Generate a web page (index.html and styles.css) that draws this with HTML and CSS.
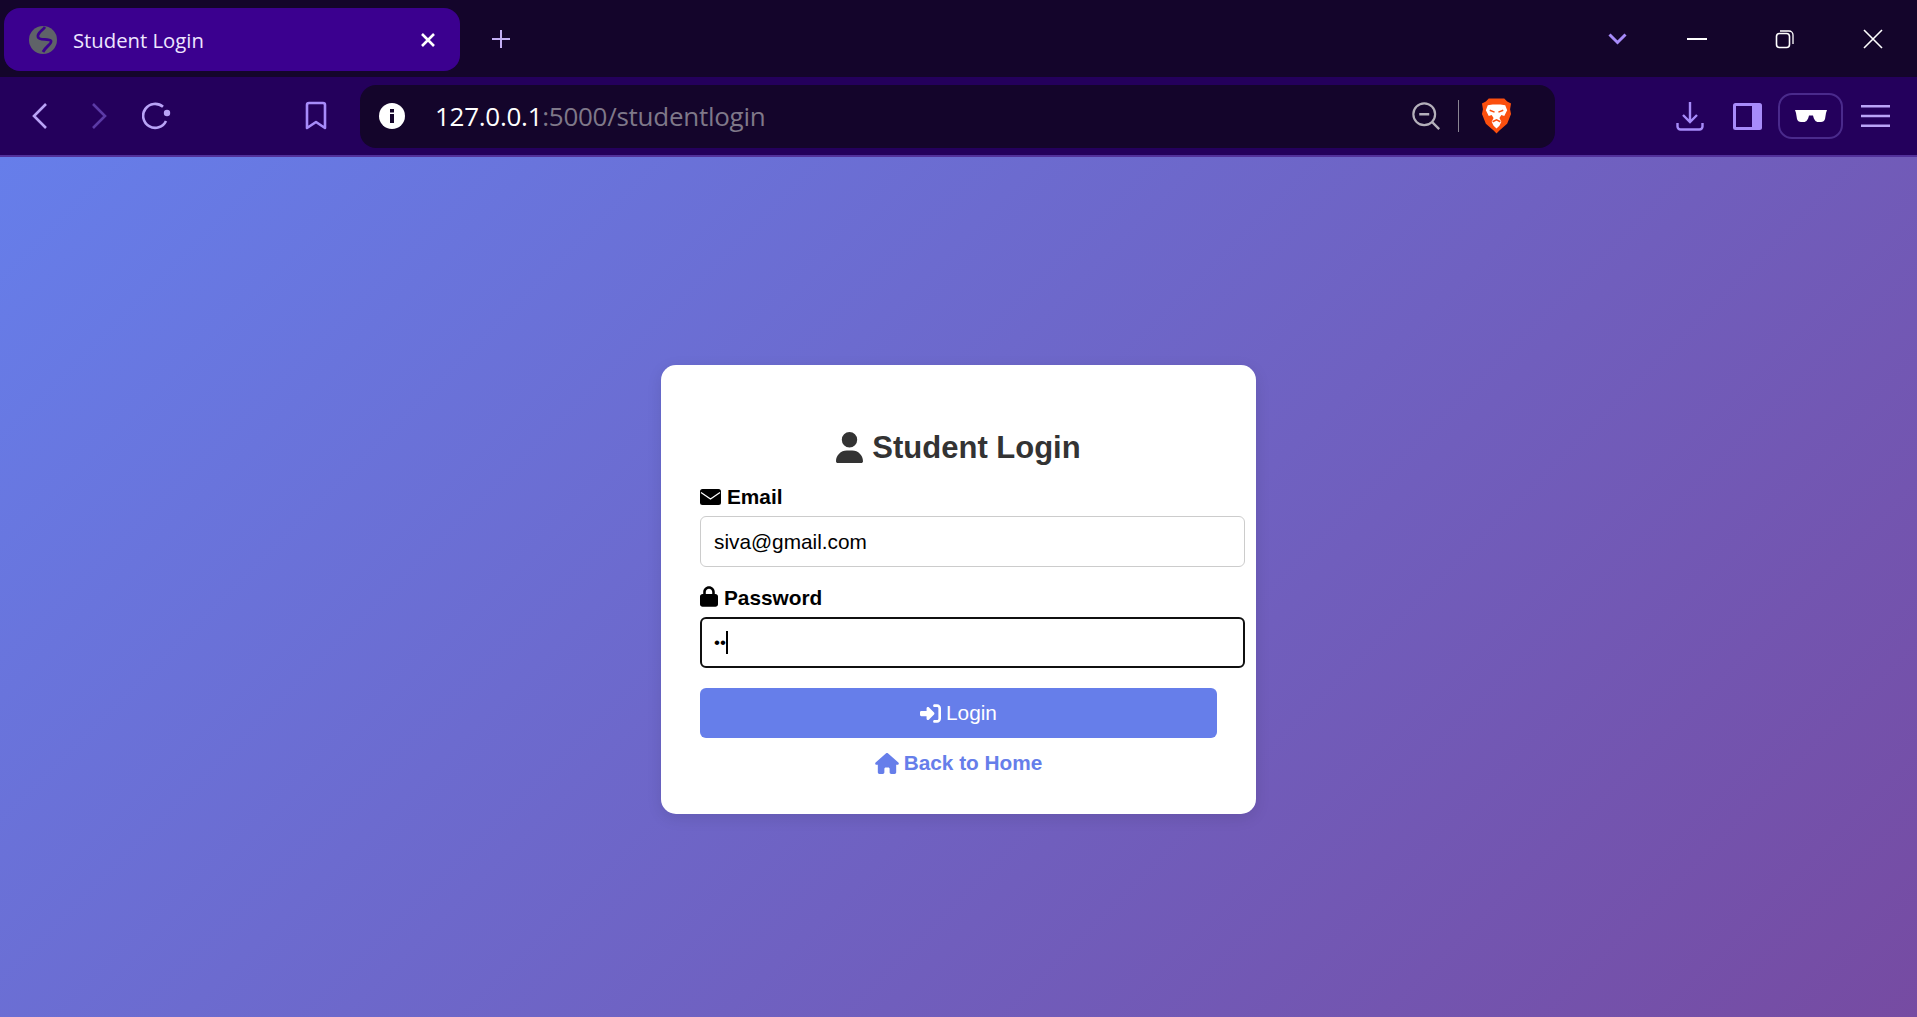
FILE: index.html
```html
<!DOCTYPE html>
<html lang="en">
<head>
  <meta charset="UTF-8" />
  <title>Student Login</title>
  <link rel="stylesheet" href="styles.css">
</head>
<body>
  <header class="browser">
    <div class="tabstrip">
      <div class="tab">
        <svg class="favicon" viewBox="0 0 28 28"><circle cx="14" cy="14" r="14" fill="#5f6368"/><path d="M16 1C13 5 8 7 9 11c1 4 11 1 13 4 1 3-5 5-8 11" fill="none" stroke="#3b008f" stroke-width="2.800"/></svg>
        <span class="tab-title">Student Login</span>
        <svg class="tab-close" viewBox="0 0 16 16"><path d="M2 2l12 12M14 2L2 14" stroke="#fff" stroke-width="2.600"/></svg>
      </div>
      <svg class="newtab" viewBox="0 0 20 20"><path d="M10 1v18M1 10h18" stroke="#c4b0f5" stroke-width="2"/></svg>
      <div class="strip-space"></div>
      <svg class="tabsearch" viewBox="0 0 19 12"><path d="M1.500 1.500l8 8 8-8" fill="none" stroke="#a78bfa" stroke-width="3"/></svg>
      <div class="winbtn"><svg width="20" height="20" viewBox="0 0 20 20"><path d="M0 10h20" stroke="#fff" stroke-width="2"/></svg></div>
      <div class="winbtn"><svg width="20" height="20" viewBox="0 0 20 20"><rect x="1.500" y="4.500" width="13" height="14" rx="3" fill="none" stroke="#fff" stroke-width="1.600"/><path d="M5 2h9a4 4 0 0 1 4 4v9" fill="none" stroke="#fff" stroke-width="1.300"/></svg></div>
      <div class="winbtn"><svg width="20" height="20" viewBox="0 0 20 20"><path d="M1 1l18 18M19 1L1 19" stroke="#fff" stroke-width="1.600"/></svg></div>
    </div>
    <div class="toolbar">
      <svg class="tool back" viewBox="0 0 16 28"><path d="M14 2L2 14l12 12" fill="none" stroke="#b9a3f7" stroke-width="2.600"/></svg>
      <svg class="tool forward" viewBox="0 0 16 28"><path d="M2 2l12 12L2 26" fill="none" stroke="#5b3aa6" stroke-width="2.600"/></svg>
      <svg class="tool reload" viewBox="0 0 30 28"><path d="M21 4.800A12 12 0 1 0 24 19" fill="none" stroke="#b9a3f7" stroke-width="2.600"/><circle cx="25" cy="11" r="3.200" fill="#b9a3f7"/></svg>
      <svg class="tool bookmark" viewBox="0 0 22 30"><path d="M2 4a2 2 0 0 1 2-2h14a2 2 0 0 1 2 2v23l-9-6-9 6z" fill="none" stroke="#a78bfa" stroke-width="2.600" stroke-linejoin="round"/></svg>
      <div class="omnibox">
        <svg class="info" viewBox="0 0 26 26"><circle cx="13" cy="13" r="13" fill="#fff"/><path d="M11 11h4v9h-4zM11 6h4v3.400h-4z" fill="#14052b"/></svg>
        <span class="url"><span class="url-host">127.0.0.1</span>:5000/studentlogin</span>
        <svg class="zoomout" viewBox="0 0 32 32"><circle cx="13.500" cy="13.500" r="12" fill="none" stroke="#b4b0ba" stroke-width="2.400"/><path d="M8 13.500h11M22 22l8 8" stroke="#b4b0ba" stroke-width="2.600"/></svg>
        <span class="omni-sep"></span>
        <svg class="lion" viewBox="0 0 32 36"><path d="M8 0h16l3 3 4 2-1 6 1 5-4 10-8 7-3 3-3-3-8-7L1 16l1-5-1-6 4-2z" fill="#fb4f0e"/><path d="M7 7l5-1h8l5 1 2 5-3 6-3-1-2 3 2 4-2 4-3 3-3-3-2-4 2-4-2-3-3 1-3-6z" fill="#fff"/><path d="M9 12l5 2M23 12l-5 2M12 24l4-2 4 2" fill="none" stroke="#fb4f0e" stroke-width="1.600"/></svg>
      </div>
      <svg class="tool download" viewBox="0 0 28 30"><path d="M14 1v20M7 14l7 7 7-7M1.500 22v3.500a3 3 0 0 0 3 3h19a3 3 0 0 0 3-3V22" fill="none" stroke="#a78bfa" stroke-width="2.400"/></svg>
      <svg class="tool sidebar" viewBox="0 0 29 27"><rect x="0" y="0" width="29" height="27" rx="2.500" fill="#a78bfa"/><rect x="3" y="3" width="16" height="21" fill="#24005c"/></svg>
      <div class="shields"><svg class="glasses" viewBox="0 0 32 12"><path d="M0 0h32l-1 3-1 6c-.5 2-2 3-4 3h-3c-2 0-4-2-5-6.500h-4C13 10 11 12 9 12H6c-2 0-3.500-1-4-3L1 3z" fill="#fff"/></svg></div>
      <svg class="tool menu" viewBox="0 0 29 22"><path d="M0 1.200h29M0 11h29M0 20.800h29" stroke="#b9a3f7" stroke-width="2.400"/></svg>
    </div>
  </header>

  <main class="page">
    <form class="login-card">
      <h2 class="card-title">
        <svg class="ico-user" viewBox="0 0 448 512"><path d="M224 256a128 128 0 1 0 0-256 128 128 0 1 0 0 256zm-45.700 48C79.800 304 0 383.800 0 482.300 0 498.700 13.300 512 29.700 512h388.600c16.400 0 29.700-13.300 29.700-29.700C448 383.800 368.200 304 269.700 304h-91.400z"/></svg>
        Student Login
      </h2>
      <label class="field-label">
        <svg class="ico-mail" viewBox="0 0 21 16"><rect width="21" height="16" rx="2.500"/><path d="M1 3.500l9.500 6.500L20 3.500" fill="none" stroke="#fff" stroke-width="1.300"/></svg>
        Email
      </label>
      <input class="field" type="text" value="siva@gmail.com" />
      <label class="field-label">
        <svg class="ico-lock" viewBox="0 0 448 512"><path d="M144 144v48H304V144c0-44.200-35.800-80-80-80s-80 35.800-80 80zM80 192V144C80 64.500 144.500 0 224 0s144 64.500 144 144v48h16c35.300 0 64 28.700 64 64V448c0 35.300-28.700 64-64 64H64c-35.300 0-64-28.700-64-64V256c0-35.300 28.700-64 64-64H80z"/></svg>
        Password
      </label>
      <div class="field field-focus"><span class="dots">••</span><span class="caret"></span></div>
      <button class="login-btn" type="button">
        <svg class="ico-login" viewBox="0 0 512 512"><path d="M352 96h64c17.700 0 32 14.300 32 32V384c0 17.700-14.300 32-32 32H352c-17.700 0-32 14.300-32 32s14.300 32 32 32h64c53 0 96-43 96-96V128c0-53-43-96-96-96H352c-17.700 0-32 14.300-32 32s14.300 32 32 32zM342.600 278.600c12.500-12.500 12.500-32.800 0-45.300l-128-128c-9.200-9.200-22.900-11.900-34.900-6.900S160 115.100 160 128v64H32c-17.700 0-32 14.300-32 32v64c0 17.700 14.300 32 32 32H160v64c0 12.900 7.800 24.600 19.800 29.600s25.700 2.200 34.900-6.900l128-128z"/></svg>
        Login
      </button>
      <a class="home-link" href="#">
        <svg class="ico-home" viewBox="0 0 576 512"><path d="M575.800 255.500c0 18-15 32.100-32 32.100h-32l.7 160.200c0 2.700-.2 5.400-.5 8.100V472c0 22.100-17.900 40-40 40H456c-1.100 0-2.200 0-3.300-.1-1.400.1-2.800.1-4.200.1H416 392c-22.100 0-40-17.900-40-40V448 384c0-17.700-14.300-32-32-32H256c-17.700 0-32 14.300-32 32v64 24c0 22.100-17.900 40-40 40H160 128.100c-1.500 0-3-.1-4.500-.2-1.200.1-2.400.2-3.600.2H104c-22.100 0-40-17.900-40-40V360c0-.9 0-1.900.1-2.800V287.600H32c-18 0-32-14-32-32.100 0-9 3-17 10-24L266.400 8c7-7 15-8 22-8s15 2 21 7L564.800 231.500c8 7 12 15 11 24z"/></svg>
        Back to Home
      </a>
    </form>
  </main>
</body>
</html>
```

FILE: styles.css
```css
* {
  box-sizing: border-box;
}

html, body {
  margin: 0;
  height: 100%;
}

body {
  display: flex;
  flex-direction: column;
  overflow: hidden;
  font-family: "Liberation Sans", Arial, sans-serif;
}

/* browser chrome */
.browser {
  flex: none;
  font-family: "Open Sans", "Noto Sans", sans-serif;
}

.tabstrip {
  display: flex;
  align-items: center;
  height: 77px;
  padding-left: 4px;
  background-color: #14052b;
}

.tab {
  display: flex;
  align-items: center;
  width: 456px;
  height: 63px;
  margin-top: 2px;
  padding: 0 24px 0 25px;
  background-color: #3b008f;
  border-radius: 16px;
  color: #fff;
}

.favicon {
  width: 28px;
  height: 28px;
  flex: none;
}

.tab-title {
  flex: 1;
  margin-left: 16px;
  font-size: 20.3px;
  color: #eee6ff;
}

.tab-close {
  width: 16px;
  height: 16px;
}

.newtab {
  width: 20px;
  height: 20px;
  margin-left: 31px;
}

.strip-space {
  flex: 1;
}

.tabsearch {
  width: 19px;
  height: 12px;
  margin-right: 26px;
}

.winbtn {
  display: flex;
  align-items: center;
  justify-content: center;
  width: 88px;
  height: 40px;
}

.toolbar {
  display: flex;
  align-items: center;
  height: 80px;
  padding-left: 32px;
  background-color: #24005c;
  border-bottom: 2px solid #52309a;
}

.tool {
  flex: none;
}

.back {
  width: 16px;
  height: 28px;
}

.forward {
  width: 16px;
  height: 28px;
  margin-left: 43px;
}

.reload {
  width: 30px;
  height: 28px;
  margin-left: 35px;
}

.bookmark {
  width: 22px;
  height: 30px;
  margin-left: 133px;
}

.omnibox {
  display: flex;
  align-items: center;
  width: 1195px;
  height: 63px;
  margin-left: 33px;
  padding: 0 43px 0 19px;
  background-color: #14052b;
  border-radius: 16px;
}

.info {
  width: 26px;
  height: 26px;
}

.url {
  flex: 1;
  margin-left: 30px;
  font-size: 26px;
  letter-spacing: -0.27px;
  color: #7f7889;
}

.url-host {
  color: #fff;
}

.zoomout {
  width: 29px;
  height: 29px;
}

.omni-sep {
  width: 1px;
  height: 32px;
  margin: 0 22px 0 17px;
  background-color: #8a8593;
}

.lion {
  width: 31px;
  height: 36px;
}

.download {
  width: 28px;
  height: 30px;
  margin-left: 121px;
}

.sidebar {
  width: 29px;
  height: 27px;
  margin-left: 29px;
}

.shields {
  display: flex;
  align-items: center;
  justify-content: center;
  width: 65px;
  height: 46px;
  margin-left: 16px;
  border: 2px solid #4a2a8c;
  border-radius: 14px;
}

.glasses {
  width: 32px;
  height: 12px;
}

.menu {
  width: 29px;
  height: 22px;
  margin-left: 18px;
}

/* login page */
.page {
  flex: 1;
  display: flex;
  align-items: center;
  justify-content: center;
  padding-top: 5px;
  background: linear-gradient(135deg, #667eea 0%, #764ba2 100%);
}

.login-card {
  width: 595px;
  height: 449px;
  padding: 64px 39px 0;
  background-color: #fff;
  border-radius: 15px;
  box-shadow: 0 4px 15px rgba(0, 0, 0, 0.1);
}

.card-title {
  display: flex;
  align-items: center;
  justify-content: center;
  gap: 9px;
  margin: 0 0 19px;
  font-size: 31px;
  line-height: 37px;
  color: #333;
}

.ico-user {
  width: 27px;
  height: 31px;
  fill: #333;
}

.field-label {
  display: flex;
  align-items: center;
  gap: 6px;
  height: 24px;
  margin-bottom: 7px;
  font-size: 20.8px;
  font-weight: bold;
  color: #000;
}

.ico-mail {
  width: 21px;
  height: 16px;
}

.ico-lock {
  width: 18px;
  height: 21px;
  margin-top: -3px;
}

.field {
  display: flex;
  align-items: center;
  width: 545px;
  height: 51px;
  margin-bottom: 19px;
  padding: 0 13px;
  border: 1px solid #ccc;
  border-radius: 6px;
  background-color: #fff;
  font-family: "Liberation Sans", Arial, sans-serif;
  font-size: 20.8px;
  color: #000;
  outline: none;
}

.field-focus {
  margin-bottom: 20px;
  border: 2px solid #101010;
  padding: 0 12px;
}

.dots {
  font-size: 17px;
}

.caret {
  width: 2px;
  height: 23px;
  background-color: #000;
}

.login-btn {
  display: flex;
  align-items: center;
  justify-content: center;
  gap: 5px;
  width: 100%;
  height: 50px;
  padding: 0;
  border: none;
  border-radius: 6px;
  background-color: #667eea;
  color: #fff;
  font-family: "Liberation Sans", Arial, sans-serif;
  font-size: 20.8px;
}

.ico-login {
  width: 21px;
  height: 21px;
  fill: #fff;
}

.home-link {
  display: flex;
  align-items: center;
  justify-content: center;
  gap: 5px;
  margin-top: 13px;
  font-size: 20.8px;
  font-weight: bold;
  color: #667eea;
  text-decoration: none;
}

.ico-home {
  width: 24px;
  height: 21px;
  fill: #667eea;
}
```
